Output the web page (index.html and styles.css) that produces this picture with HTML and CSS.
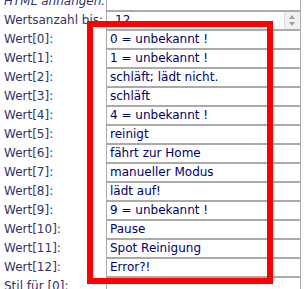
FILE: index.html
```html
<!DOCTYPE html>
<html lang="de">
<head>
    <meta charset="UTF-8">
    <title>Werte</title>
    <link rel="stylesheet" href="styles.css">
</head>
<body>

<div class="form">
    <div class="row">
        <label class="lbl italic">HTML anhängen:</label>
        <div class="field"></div>
    </div>
    <div class="row">
        <label class="lbl">Wertsanzahl bis:</label>
        <div class="field number">12
            <span class="spin"><i class="up"></i><i class="down"></i></span>
        </div>
    </div>
    <div class="row"><label class="lbl">Wert[0]:</label><div class="field">0 = unbekannt !</div></div>
    <div class="row"><label class="lbl">Wert[1]:</label><div class="field">1 = unbekannt !</div></div>
    <div class="row"><label class="lbl">Wert[2]:</label><div class="field">schläft; lädt nicht.</div></div>
    <div class="row"><label class="lbl">Wert[3]:</label><div class="field">schläft</div></div>
    <div class="row"><label class="lbl">Wert[4]:</label><div class="field">4 = unbekannt !</div></div>
    <div class="row"><label class="lbl">Wert[5]:</label><div class="field">reinigt</div></div>
    <div class="row"><label class="lbl">Wert[6]:</label><div class="field">fährt zur Home</div></div>
    <div class="row"><label class="lbl">Wert[7]:</label><div class="field">manueller Modus</div></div>
    <div class="row"><label class="lbl">Wert[8]:</label><div class="field">lädt auf!</div></div>
    <div class="row"><label class="lbl">Wert[9]:</label><div class="field">9 = unbekannt !</div></div>
    <div class="row"><label class="lbl">Wert[10]:</label><div class="field">Pause</div></div>
    <div class="row"><label class="lbl">Wert[11]:</label><div class="field">Spot Reinigung</div></div>
    <div class="row"><label class="lbl">Wert[12]:</label><div class="field">Error?!</div></div>
    <div class="row"><label class="lbl">Stil für [0]:</label><div class="field"></div></div>

    <div class="highlight"></div>
</div>

</body>
</html>
```

FILE: styles.css
```css
body {
    margin: 0;
    font-family: "DejaVu Sans", Verdana, sans-serif;
    font-size: 12px;
    background-color: #ffffff;
    overflow: hidden;
}

.form {
    position: relative;
    margin-top: -8px;
    width: 301px;
}

.row {
    display: grid;
    grid-template-columns: 106px 195px;
    height: 19px;
}

.lbl {
    padding-left: 4px;
    line-height: 19px;
    color: #33336b;
    white-space: nowrap;
}

.italic {
    font-style: italic;
}

.field {
    position: relative;
    box-sizing: border-box;
    height: 19px;
    border: 1px solid #aaaaaa;
    padding-left: 3px;
    line-height: 17px;
    color: #000066;
    white-space: nowrap;
}

.number {
    padding-left: 8px;
}

/* Spinner des Zahlenfeldes */
.spin {
    position: absolute;
    right: 0;
    top: 0;
    width: 15px;
    height: 17px;
    background-color: #f0f0f0;
    border-left: 1px solid #dddddd;
}

.spin i {
    position: absolute;
    left: 4px;
    width: 0;
    height: 0;
    border-left: 3px solid transparent;
    border-right: 3px solid transparent;
}

.spin .up {
    top: 3px;
    border-bottom: 4px solid #a0a0a0;
}

.spin .down {
    bottom: 3px;
    border-top: 4px solid #a0a0a0;
}

/* roter Rahmen */
.highlight {
    position: absolute;
    left: 87px;
    top: 29px;
    width: 174px;
    height: 251px;
    border: 6px solid #ff0000;
}
```
